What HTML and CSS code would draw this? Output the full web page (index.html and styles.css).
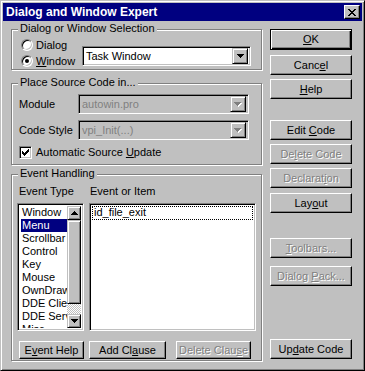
FILE: index.html
```html
<!DOCTYPE html>
<html lang="en">
<head>
    <meta charset="UTF-8">
    <meta name="viewport" content="width=device-width, initial-scale=1.0">
    <title>Dialog and Window Expert</title>
    <link rel="stylesheet" href="styles.css">
</head>
<body>

<div class="window">
    <div class="titlebar">
        <span class="title">Dialog and Window Expert</span>
        <button class="close-btn" title="Close">
            <svg width="8" height="7" viewBox="0 0 8 7"><path d="M0 0h2v1H0zM6 0h2v1H6zM1 1h2v1H1zM5 1h2v1H5zM2 2h4v1H2zM3 3h2v1H3zM2 4h4v1H2zM1 5h2v1H1zM5 5h2v1H5zM0 6h2v1H0zM6 6h2v1H6z" fill="#000"/></svg>
        </button>
    </div>

    <div class="dialog">
        <div class="left-col">

            <div class="group group-select">
                <span class="group-title">Dialog or Window Selection</span>
                <div class="radios">
                    <label class="radio-row"><span class="radio"></span><span>Dialog</span></label>
                    <label class="radio-row"><span class="radio checked"></span><span><u>W</u>indow</span></label>
                </div>
                <div class="combo combo-task">
                    <span class="combo-text">Task Window</span>
                    <span class="combo-btn"><svg width="7" height="4" viewBox="0 0 7 4"><path d="M0 0h7v1H0zM1 1h5v1H1zM2 2h3v1H2zM3 3h1v1H3z" fill="#000"/></svg></span>
                </div>
            </div>

            <div class="group group-source">
                <span class="group-title">Place Source Code in...</span>
                <div class="field-row">
                    <span class="field-label">Module</span>
                    <div class="combo combo-source disabled">
                        <span class="combo-text">autowin.pro</span>
                        <span class="combo-btn"><svg width="8" height="5" viewBox="0 0 8 5"><path d="M1 1h7v1H1zM2 2h5v1H2zM3 3h3v1H3zM4 4h1v1H4z" fill="#fff"/><path d="M0 0h7v1H0zM1 1h5v1H1zM2 2h3v1H2zM3 3h1v1H3z" fill="#808080"/></svg></span>
                    </div>
                </div>
                <div class="field-row">
                    <span class="field-label">Code Style</span>
                    <div class="combo combo-source disabled">
                        <span class="combo-text">vpi_Init(...)</span>
                        <span class="combo-btn"><svg width="8" height="5" viewBox="0 0 8 5"><path d="M1 1h7v1H1zM2 2h5v1H2zM3 3h3v1H3zM4 4h1v1H4z" fill="#fff"/><path d="M0 0h7v1H0zM1 1h5v1H1zM2 2h3v1H2zM3 3h1v1H3z" fill="#808080"/></svg></span>
                    </div>
                </div>
                <label class="check-row">
                    <span class="checkbox"><svg width="9" height="9" viewBox="0 0 9 9"><path d="M7 1h1v3H7zM6 2h1v3H6zM5 3h1v3H5zM4 4h1v3H4zM3 5h1v3H3zM2 4h1v3H2zM1 3h1v3H1z" fill="#000"/></svg></span>
                    <span>Automatic Source <u>U</u>pdate</span>
                </label>
            </div>

            <div class="group group-events">
                <span class="group-title">Event Handling</span>
                <div class="event-grid">
                    <span class="list-label">Event Type</span>
                    <span class="list-label">Event or Item</span>

                    <div class="listbox list-types">
                        <div class="list-items">
                            <div class="list-item">Window</div>
                            <div class="list-item selected">Menu</div>
                            <div class="list-item">Scrollbar</div>
                            <div class="list-item">Control</div>
                            <div class="list-item">Key</div>
                            <div class="list-item">Mouse</div>
                            <div class="list-item">OwnDraw</div>
                            <div class="list-item">DDE Client</div>
                            <div class="list-item">DDE Server</div>
                            <div class="list-item">Misc</div>
                        </div>
                        <div class="scrollbar">
                            <span class="scroll-btn"><svg width="7" height="4" viewBox="0 0 7 4"><path d="M3 0h1v1H3zM2 1h3v1H2zM1 2h5v1H1zM0 3h7v1H0z" fill="#000"/></svg></span>
                            <span class="scroll-thumb"></span>
                            <span class="scroll-track"></span>
                            <span class="scroll-btn"><svg width="7" height="4" viewBox="0 0 7 4"><path d="M0 0h7v1H0zM1 1h5v1H1zM2 2h3v1H2zM3 3h1v1H3z" fill="#000"/></svg></span>
                        </div>
                    </div>

                    <div class="listbox list-events">
                        <div class="list-item focused">id_file_exit</div>
                    </div>
                </div>

                <div class="event-buttons">
                    <button class="btn btn-event-help"><span>E<u>v</u>ent Help</span></button>
                    <button class="btn btn-add"><span>Add Cl<u>a</u>use</span></button>
                    <button class="btn btn-delete disabled"><span>Delete Clau<u>s</u>e</span></button>
                </div>
            </div>

        </div>

        <div class="right-col">
            <button class="btn btn-default btn-ok"><span><u>O</u>K</span></button>
            <button class="btn btn-cancel"><span>Canc<u>e</u>l</span></button>
            <button class="btn btn-help"><span><u>H</u>elp</span></button>
            <button class="btn btn-edit"><span>Edit <u>C</u>ode</span></button>
            <button class="btn btn-gap4 disabled"><span>De<u>l</u>ete Code</span></button>
            <button class="btn btn-gap4 disabled"><span>Declarat<u>i</u>on</span></button>
            <button class="btn btn-layout"><span>Lay<u>o</u>ut</span></button>
            <button class="btn btn-toolbars disabled"><span><u>T</u>oolbars...</span></button>
            <button class="btn btn-pack disabled"><span>Dialog <u>P</u>ack...</span></button>
            <button class="btn btn-update"><span>Up<u>d</u>ate Code</span></button>
        </div>
    </div>
</div>

</body>
</html>
```

FILE: styles.css
```css
* { box-sizing: border-box; }
body { margin: 0; background: #c0c0c0; font-family: "Liberation Sans", Arial, sans-serif; font-size: 11px; line-height: 13px; color: #000; }
u { text-decoration: underline; text-underline-offset: 1px; }

/* window frame */
.window { width: 365px; height: 371px; background: #c0c0c0; border: 1px solid; border-color: #c0c0c0 #000 #000 #c0c0c0; box-shadow: inset 1px 1px #fff, inset -1px -1px #808080; padding: 2px; }
.titlebar { height: 18px; background: #000080; color: #fff; display: flex; align-items: center; justify-content: space-between; padding: 0 2px 0 3px; }
.title { font-weight: bold; font-size: 12px; }
.close-btn { width: 16px; height: 14px; padding: 0; background: #c0c0c0; border: 1px solid; border-color: #fff #000 #000 #fff; box-shadow: inset -1px -1px #808080; display: flex; align-items: center; justify-content: center; }

.dialog { display: flex; }
.left-col { width: 251px; margin-left: 8px; display: flex; flex-direction: column; }
.right-col { width: 82px; margin-left: 8px; display: flex; flex-direction: column; }

/* group boxes */
.group { position: relative; border: 1px solid #808080; box-shadow: inset 1px 1px #fff, 1px 1px #fff; }
.group-title { position: absolute; top: -8px; left: 6px; padding: 0 2px; background: #c0c0c0; white-space: nowrap; }
.group-select { margin-top: 8px; height: 41px; display: flex; padding: 7px 0 0 9px; }
.group-source { margin-top: 13px; height: 82px; padding: 10px 0 0 7px; }
.group-events { margin-top: 9px; height: 187px; padding: 10px 0 0 5px; }

/* radios */
.radios { width: 61px; }
.radio-row { height: 16px; display: flex; align-items: center; }
.radio { width: 12px; height: 12px; margin-right: 3px; border-radius: 50%; background: #fff; border: 1px solid; border-color: #808080 #fff #fff #808080; box-shadow: inset 1px 1px #000, inset -1px -1px #c0c0c0; display: flex; align-items: center; justify-content: center; }
.radio.checked::after { content: ""; width: 4px; height: 4px; border-radius: 50%; background: #000; }

/* combo boxes */
.combo { height: 20px; display: flex; align-items: center; background: #fff; border: 1px solid; border-color: #808080 #fff #fff #808080; box-shadow: inset 1px 1px #000, inset -1px -1px #c0c0c0; padding: 1px; }
.combo-task { width: 169px; margin-top: 9px; }
.combo-source { width: 171px; }
.combo.disabled { background: #c0c0c0; color: #808080; }
.combo-text { flex: 1; padding-left: 2px; padding-top: 1px; white-space: nowrap; }
.combo-btn { width: 16px; height: 16px; margin-right: 1px; background: #c0c0c0; border: 1px solid; border-color: #c0c0c0 #000 #000 #c0c0c0; box-shadow: inset 1px 1px #fff, inset -1px -1px #808080; display: flex; align-items: center; justify-content: center; }

.field-row { height: 20px; display: flex; align-items: center; margin-bottom: 6px; }
.field-label { width: 59px; }
.check-row { height: 13px; display: flex; align-items: center; gap: 4px; }
.checkbox { width: 13px; height: 13px; background: #fff; border: 1px solid; border-color: #808080 #fff #fff #808080; box-shadow: inset 1px 1px #000, inset -1px -1px #c0c0c0; padding: 1px; display: flex; }

/* event handling */
.event-grid { display: grid; grid-template-columns: 67px 167px; column-gap: 5px; row-gap: 5px; }
.list-label { padding-left: 2px; }
.list-label + .list-label { padding-left: 1px; }
.listbox { height: 128px; background: #fff; border: 1px solid; border-color: #808080 #fff #fff #808080; box-shadow: inset 1px 1px #000, inset -1px -1px #c0c0c0; padding: 2px; overflow: hidden; }
.list-types { display: flex; }
.list-items { flex: 1; overflow: hidden; padding-left: 1px; }
.list-item { height: 13px; padding-left: 1px; white-space: nowrap; }
.list-item.selected { background: #000080; color: #fff; }
.list-item.focused { height: 14px; padding-left: 2px; outline: 1px dotted #000; outline-offset: -1px; }
.scrollbar { width: 14px; display: flex; flex-direction: column; }
.scroll-btn, .scroll-thumb { background: #c0c0c0; border: 1px solid; border-color: #c0c0c0 #000 #000 #c0c0c0; box-shadow: inset 1px 1px #fff, inset -1px -1px #808080; }
.scroll-btn { height: 14px; display: flex; align-items: center; justify-content: center; }
.scroll-thumb { height: 86px; }
.scroll-track { height: 10px; background-image: repeating-conic-gradient(#c0c0c0 0 25%, #fff 0 50%); background-size: 2px 2px; }

.event-buttons { display: flex; margin-top: 10px; padding-left: 2px; }
.event-buttons .btn { height: 18px; }
.btn-event-help { width: 65px; }
.btn-add { width: 77px; margin-left: 5px; }
.btn-delete { width: 75px; margin-left: 10px; }

/* push buttons */
.btn { height: 20px; padding: 0; font: inherit; color: #000; background: #c0c0c0; border: 1px solid; border-color: #fff #000 #000 #fff; box-shadow: inset -1px -1px #808080; display: flex; align-items: center; justify-content: center; white-space: nowrap; cursor: pointer; }
.btn.disabled { color: #808080; text-shadow: 1px 1px 0 #fff; cursor: default; }
.btn-default { border-color: #000; box-shadow: inset 1px 1px #fff, inset -1px -1px #000, inset -2px -2px #808080; }
.btn-ok { margin-top: 8px; height: 21px; }
.btn-cancel { margin-top: 5px; }
.btn-help { margin-top: 4px; }
.btn-edit { margin-top: 21px; }
.btn-gap4 { margin-top: 4px; }
.btn-layout { margin-top: 5px; }
.btn-toolbars { margin-top: 25px; }
.btn-pack { margin-top: 8px; }
.btn-update { margin-top: 53px; }
```
